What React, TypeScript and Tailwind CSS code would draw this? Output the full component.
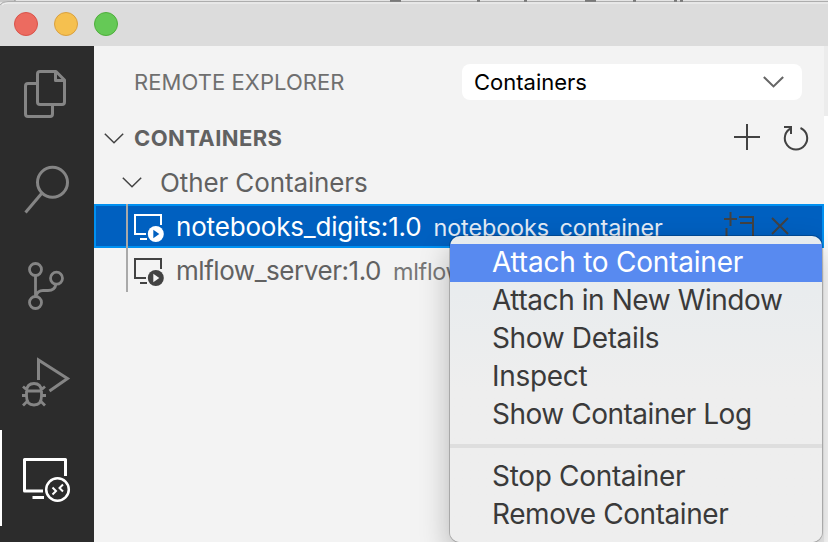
import React from "react";

const FONT = "font-['Inter','Liberation_Sans',sans-serif]";

function Chevron({ className }: { className: string }) {
  return (
    <svg viewBox="0 0 20 11" fill="none" stroke="currentColor" className={className}>
      <path d="M.8 .8 10 9.7 19.2 .8" />
    </svg>
  );
}

function FilesIcon() {
  return (
    <svg width="94" height="96" viewBox="0 0 94 96" fill="none" stroke="#858585" strokeWidth="3" strokeLinejoin="round">
      <path d="M37.500 37.500H28a2.500 2.500 0 0 0-2.500 2.500v28a2.500 2.500 0 0 0 2.500 2.500h22a2.500 2.500 0 0 0 2.500-2.500v-9.500" />
      <path d="M40 25.500h16l8.500 8.500v22a2.500 2.500 0 0 1-2.500 2.500H40a2.500 2.500 0 0 1-2.500-2.500V28a2.500 2.500 0 0 1 2.500-2.500z" />
      <path d="M55.500 25.500V34.500H64.500" />
    </svg>
  );
}

function SearchIcon() {
  return (
    <svg width="94" height="96" viewBox="0 0 94 96" fill="none" stroke="#858585" strokeWidth="3">
      <circle cx="52.500" cy="40.300" r="15" />
      <path d="M42 51 25.500 70.500" />
    </svg>
  );
}

function BranchIcon() {
  return (
    <svg width="94" height="96" viewBox="0 0 94 96" fill="none" stroke="#858585" strokeWidth="2.800">
      <circle cx="35.500" cy="31.500" r="6" />
      <circle cx="56.500" cy="40.200" r="6" />
      <circle cx="35.500" cy="64.500" r="6" />
      <path d="M35.500 37.500V58.500M36 58Q37.500 52.500 43 52.500H48Q55 52.500 56 46" />
    </svg>
  );
}

function DebugIcon() {
  return (
    <svg width="94" height="96" viewBox="0 0 94 96" fill="none" stroke="#858585" strokeWidth="2.800">
      <path d="M38.500 46V26L67.500 44.500 49.500 57" strokeWidth="3" />
      <path d="M26.500 57Q27 49.500 34 49.500T41.500 57V62Q41.500 71 34 71T26.500 62ZM26 57H42M22 61.500H27M41 61.500H46M23 52.500 27.500 56.500M45 52.500 40.500 56.500M23 71.500 28 66.500M45 71.500 40 66.500" />
    </svg>
  );
}

function RemoteIcon() {
  return (
    <svg width="94" height="96" viewBox="0 0 94 96" fill="none" stroke="#fff">
      <path d="M43 61H24.500V29.500H65.500V46M32.500 67.500H44" strokeWidth="3" strokeLinejoin="round" />
      <circle cx="57.500" cy="59.500" r="11.300" strokeWidth="2.500" />
      <path d="M52.500 57.500 56 61 52.500 64.500M63 54.500 59.500 58 63 61.500" strokeWidth="2" />
    </svg>
  );
}

function ContainerIcon({ body, play }: { body: string; play: string }) {
  return (
    <svg width="32" height="32" viewBox="0 0 32 32" fill="none" className="shrink-0">
      <path d="M13 24H2V5H28V15M7 29H14" stroke={body} strokeWidth="2" />
      <circle cx="22.800" cy="24" r="8" fill={body} />
      <path d="M20.300 19.800v8.400l6-4.200z" fill={play} />
    </svg>
  );
}

function Dot({ className }: { className: string }) {
  return <span className={`size-6 rounded-full border ${className}`} />;
}

function MenuItem({ label, active, className }: { label: string; active?: boolean; className: string }) {
  return (
    <div className={`flex h-[38px] items-center pb-0.5 pl-[42px] ${active ? "bg-[#588af0] text-white" : "text-[#3a3a3a]"}`}>
      <span className={className}>{label}</span>
    </div>
  );
}

export default function App() {
  return (
    <div className={`relative flex h-[542px] w-[828px] flex-col overflow-hidden whitespace-nowrap bg-[#e2e2e2] ${FONT}`}>
      <svg width="828" height="6" viewBox="0 0 828 6" className="block shrink-0">
        <path d="M0 0H828V6H0z" fill="#e4e4e4" />
        <path d="M0 0H15V2H0z" fill="#c9c9c9" />
        <path d="M15 0v2" stroke="#888" />
        <path d="M0 6V5Q2 1.500 8 1.500H828V6z" fill="#dcdcdc" />
        <path d="M0 5Q2 1.500 8 1.500H828" fill="none" stroke="#adadad" />
        <path d="M2 5Q4 3 8 3H828" fill="none" stroke="#f3f3f3" />
        <path d="M390 .8h11M477 .8h3M524 .8h3M585 .8h11M633 .8h3M674 .8h3M680 .8h3" stroke="#555" strokeWidth="1.200" />
      </svg>
      <header className="flex h-10 shrink-0 items-center gap-4 bg-[#dcdcdc] pb-1 pl-3.5">
        <Dot className="border-[#d9534a] bg-[#ec6b60]" />
        <Dot className="border-[#d9a040] bg-[#f5c04f]" />
        <Dot className="border-[#4fae3c] bg-[#65c956]" />
      </header>
      <div className="flex min-h-0 flex-1">
        <nav className="flex w-[94px] shrink-0 flex-col bg-[#2c2c2c]">
          <FilesIcon />
          <SearchIcon />
          <BranchIcon />
          <DebugIcon />
          <div className="h-24 shadow-[inset_2px_0_0_#fff]">
            <RemoteIcon />
          </div>
        </nav>
        <main className="flex w-[730px] flex-col bg-[#f3f3f3]">
          <div className="flex h-[72px] items-center justify-between pl-10 pr-[22px]">
            <span className="text-[22px] tracking-[0.07px] text-[#6f6f6f]">REMOTE EXPLORER</span>
            <div className="flex h-9 w-[340px] items-center justify-between rounded-lg bg-white pl-3 pr-[18px]">
              <span className="text-[22px] text-black">Containers</span>
              <Chevron className="h-[12px] w-[21px] stroke-2 text-[#666]" />
            </div>
          </div>
          <div className="flex h-10 items-center text-[#616161]">
            <Chevron className="ml-2.5 h-[11px] w-5 stroke-[1.5] text-[#424242]" />
            <span className="ml-2.5 text-[22px] font-bold tracking-[0.4px]">CONTAINERS</span>
            <svg width="80" height="32" viewBox="0 0 80 32" fill="none" stroke="#424242" strokeWidth="2" className="ml-auto mr-3.5">
              <path d="M17 2V28M4 15H30" />
              <path d="M61.500 6A11.200 11.200 0 1 0 70.500 6M54 5H61V12" />
            </svg>
          </div>
          <div className="flex h-[46px] items-center pt-0.5 text-[#616161]">
            <Chevron className="ml-7 mt-px h-[11px] w-5 stroke-[1.5] text-[#424242]" />
            <span className="ml-[18px] pt-px text-[26px] tracking-[-0.12px]">Other Containers</span>
          </div>
          <div className="relative">
            <div className="flex h-11 items-center border-2 border-[#0090f1] bg-[#0060c0] pl-[37px] text-white">
              <ContainerIcon body="#fff" play="#0060c0" />
              <span className="ml-[11px] pt-px text-[26px] tracking-[-0.18px]">notebooks_digits:1.0</span>
              <span className="ml-3 pt-1 text-[23.4px] tracking-[-0.1px] text-[#e2ebf6]">notebooks_container</span>
              <svg width="70" height="40" viewBox="0 0 70 40" fill="none" stroke="#424242" strokeWidth="2" className="ml-auto mr-8">
                <path d="M10.500 6V20M4 13H17M6.500 22V34H33V11H19M20 17H33M52 12 68 28M68 12 52 28" />
              </svg>
            </div>
            <div className="flex h-11 items-center pl-[39px] text-[#616161]">
              <ContainerIcon body="#424242" play="#f3f3f3" />
              <span className="ml-[11px] pt-px text-[26px] tracking-[-0.45px]">mlflow_server:1.0</span>
              <span className="ml-3 pt-[3px] text-[23.4px] tracking-[-0.3px] text-[#777]">mlflow_container</span>
            </div>
            <span className="absolute left-8 top-0 h-[88px] w-0.5 bg-[#a9a9a9]" />
          </div>
        </main>
        <aside className="flex-1 border-t-[70px] border-[#ececec] bg-white" />
      </div>
      <div className="absolute left-[450px] top-[236px] h-[306px] w-[372px] rounded-[10px] bg-linear-to-b from-[#e6ebee] to-[#eee] to-50% shadow-[0_0_0_1px_#0003,0_12px_30px_#0004]">
        <div className="pt-2 text-[28px]">
          <MenuItem active label="Attach to Container" className="tracking-[-0.22px]" />
          <MenuItem label="Attach in New Window" className="tracking-[-0.42px]" />
          <MenuItem label="Show Details" className="tracking-[-0.35px]" />
          <MenuItem label="Inspect" className="tracking-[-0.3px]" />
          <MenuItem label="Show Container Log" className="tracking-[-0.48px]" />
          <div className="mb-2.5 mt-[10px] h-1 bg-[#dedede]" />
          <MenuItem label="Stop Container" className="tracking-[-0.32px]" />
          <MenuItem label="Remove Container" className="tracking-[-0.42px]" />
        </div>
      </div>
    </div>
  );
}
